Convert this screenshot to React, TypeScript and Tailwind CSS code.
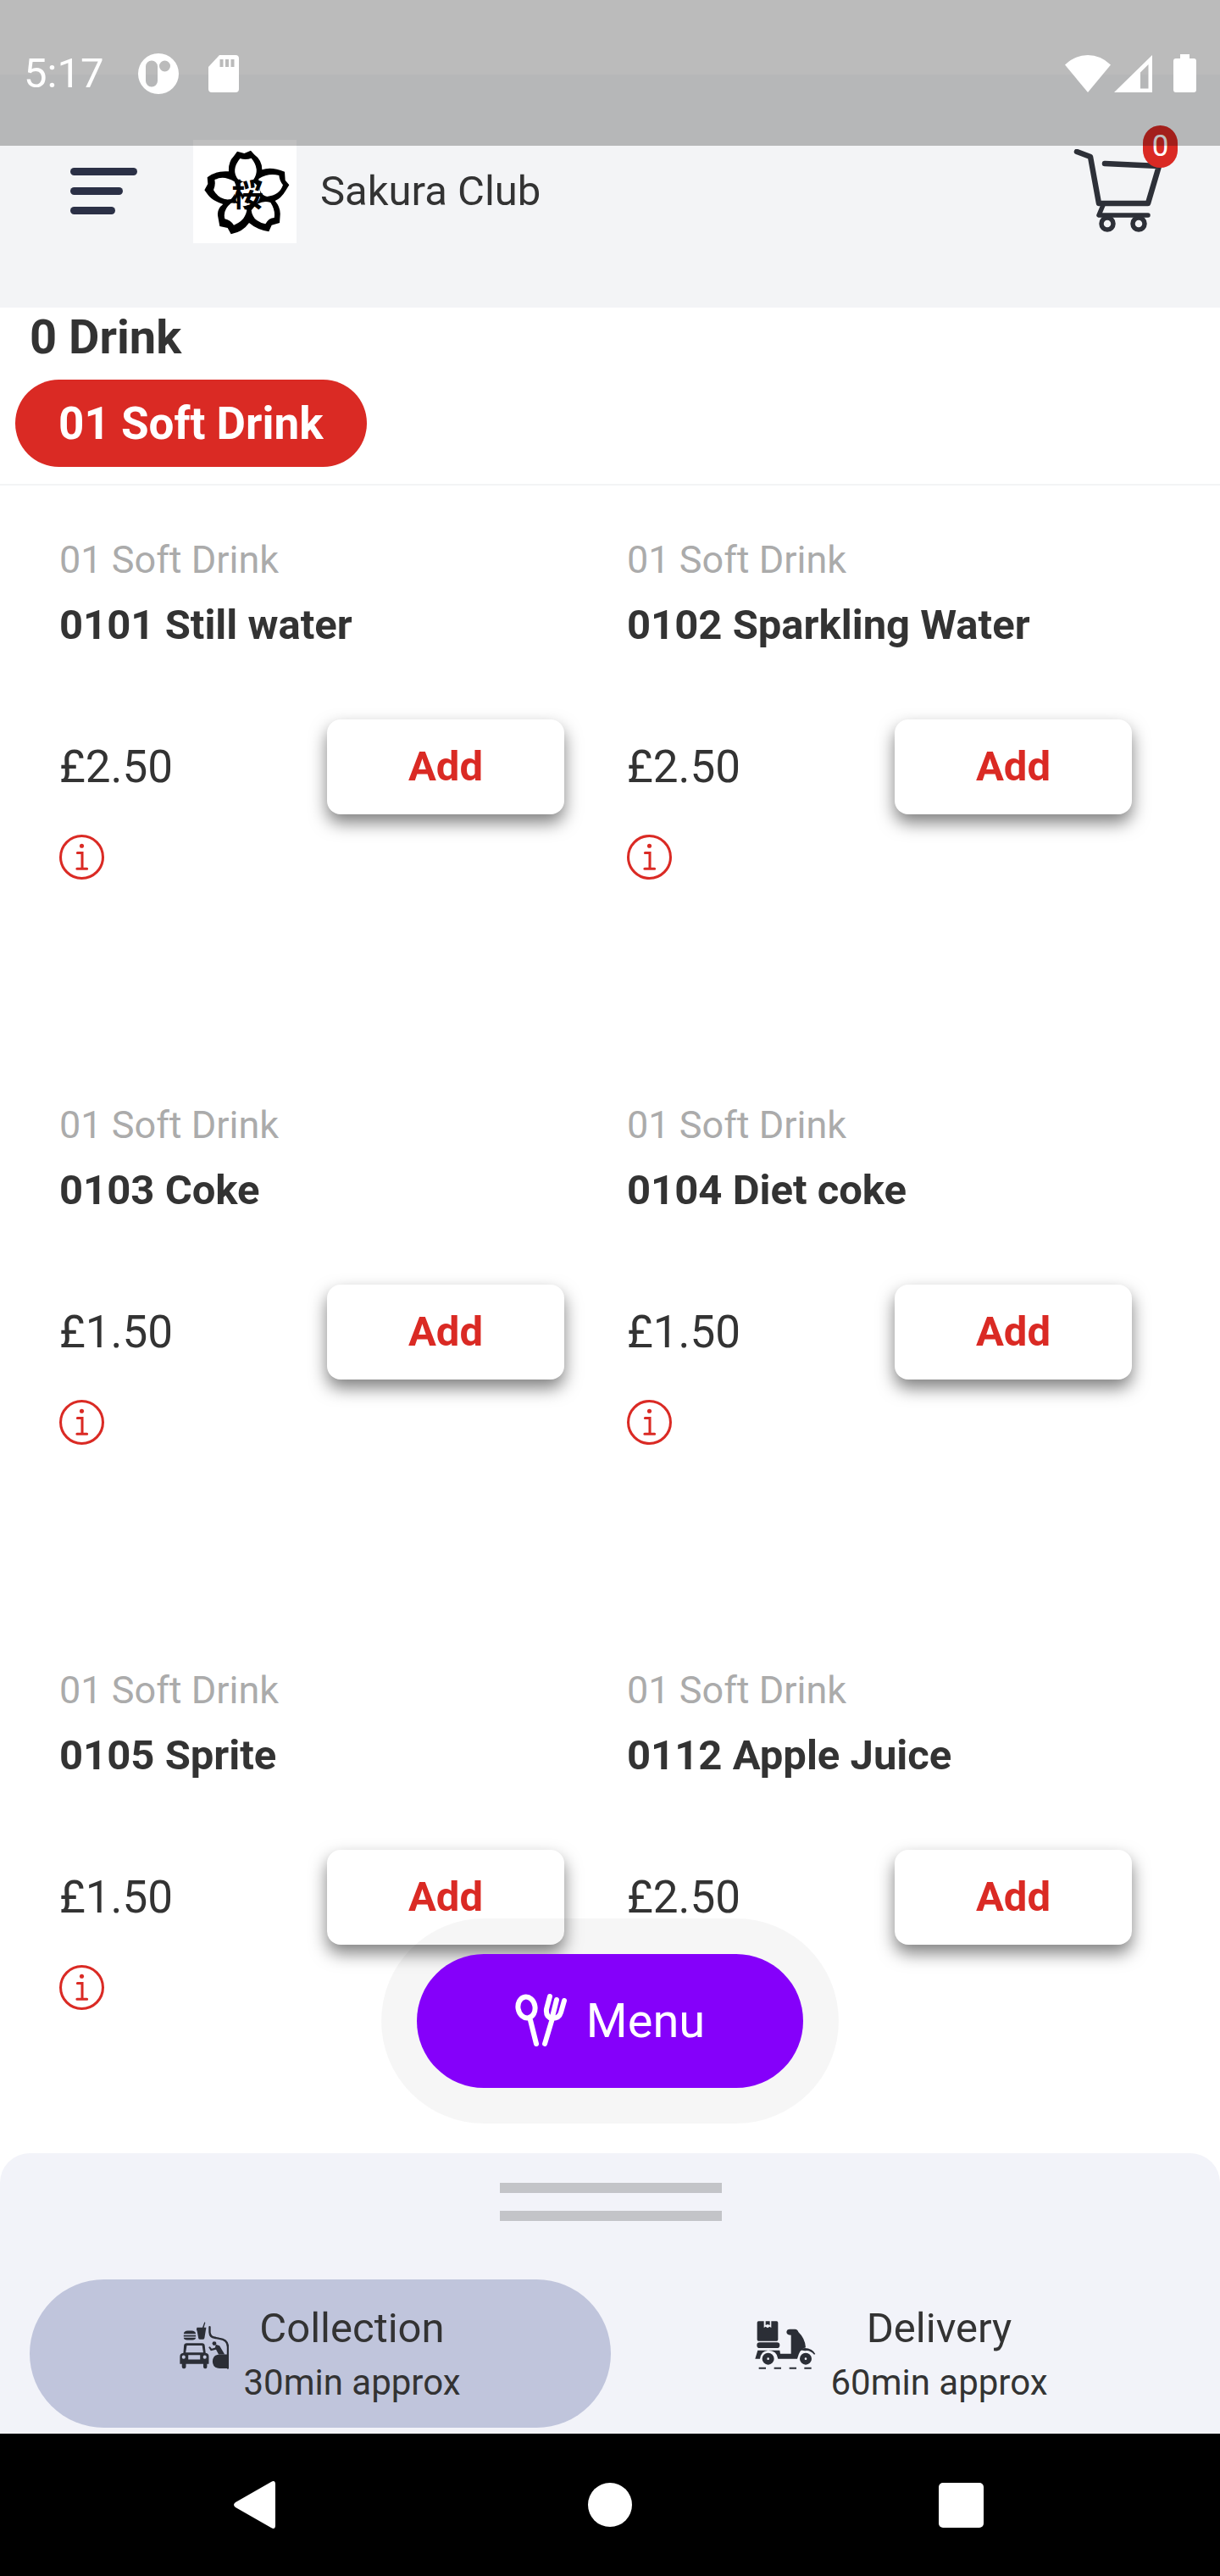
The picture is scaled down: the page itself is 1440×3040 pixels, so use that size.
import { useState } from 'react'

type Drink = { id: string; category: string; name: string; price: string; info: boolean }
type OrderMode = 'collection' | 'delivery'

const drinks: Drink[] = [
  { id: '0101', category: '01 Soft Drink', name: '0101 Still water', price: '£2.50', info: true },
  { id: '0102', category: '01 Soft Drink', name: '0102 Sparkling Water', price: '£2.50', info: true },
  { id: '0103', category: '01 Soft Drink', name: '0103 Coke', price: '£1.50', info: true },
  { id: '0104', category: '01 Soft Drink', name: '0104 Diet coke', price: '£1.50', info: true },
  { id: '0105', category: '01 Soft Drink', name: '0105 Sprite', price: '£1.50', info: true },
  { id: '0112', category: '01 Soft Drink', name: '0112 Apple Juice', price: '£2.50', info: false },
]

function StatusBar() {
  return (
    <div className="absolute inset-x-0 top-0 z-20 h-[172px] bg-black/25 pt-[57px] pl-[28px] pr-[28px] text-white">
      <div className="flex h-[60px] items-center">
        <span className="text-[49px] leading-[60px]">5:17</span>
        <svg className="ml-[40px] h-[50px] w-[50px]" viewBox="0 0 50 50" aria-hidden="true">
          <path
            fill="currentColor"
            fillRule="evenodd"
            d="M25 1a24 24 0 1 1 0 48a24 24 0 1 1 0-48ZM17 9.500a7 7 0 0 0-7 7v17a7 7 0 0 0 14 0v-17a7 7 0 0 0-7-7ZM32.500 9.500a6.500 6.500 0 1 0 0 13a6.500 6.500 0 1 0 0-13Z"
          />
        </svg>
        <svg className="ml-[34px] h-[46px] w-[36px]" viewBox="0 0 36 46" aria-hidden="true">
          <path
            fill="currentColor"
            fillRule="evenodd"
            d="M13 1h19q4 0 4 4v36q0 4-4 4H4q-4 0-4-4V15ZM13.500 6v9h4V6ZM20 6v9h4V6ZM26.500 6v9h4V6Z"
          />
        </svg>
        <svg className="ml-auto h-[46px] w-[54px]" viewBox="0 0 54 46" aria-hidden="true">
          <path fill="currentColor" d="M27 1Q42 1 54 12.500L27 45L0 12.500Q12 1 27 1Z" />
        </svg>
        <svg className="ml-[4px] h-[46px] w-[45px]" viewBox="0 0 45 46" aria-hidden="true">
          <path fill="currentColor" fillRule="evenodd" d="M45 1v44H0ZM40.500 12L31 21.500V40.500h9.500Z" />
        </svg>
        <svg className="ml-[25px] h-[46px] w-[27px]" viewBox="0 0 27 46" aria-hidden="true">
          <path fill="currentColor" d="M8 0h11v5h5q3 0 3 3v34q0 3-3 3H3q-3 0-3-3V8q0-3 3-3h5Z" />
        </svg>
      </div>
    </div>
  )
}

function SakuraLogo() {
  return (
    <svg className="h-[122px] w-[122px] bg-white" viewBox="24 12 366 366" role="img" aria-label="Sakura Club logo">
      <path d="M180 53L205 60L228 50L240 64Q268 84 268 118Q300 106 348 125L350 155L364 172L350 194Q336 218 314 228Q334 252 332 278L330 306L302 314L292 337Q250 330 222 306Q200 338 158 346L146 324L118 318L112 285Q106 258 130 240Q92 228 76 206L64 190L76 168L74 145Q104 120 150 124Q148 90 168 70Z" />
      <g fill="#fff">
        <path d="M190 78Q210 84 230 77Q262 116 238 152Q218 168 184 154Q156 120 190 78Z" />
        <path d="M256 150Q290 128 328 138Q330 158 342 172Q330 208 286 213Q254 208 256 150Z" />
        <path d="M230 262Q258 222 298 234Q316 262 311 288Q292 288 280 310Q234 300 230 262Z" />
        <path d="M158 236Q196 232 214 262Q208 298 168 314Q156 296 136 292Q128 260 158 236Z" />
        <path d="M96 190Q104 172 100 154Q130 136 170 160Q186 190 158 222Q120 230 96 190Z" />
        <circle cx="216" cy="204" r="46" />
      </g>
      <text
        x="216"
        y="249"
        fontSize="112"
        fontWeight="700"
        textAnchor="middle"
        className="font-['Noto_Sans_CJK_JP',sans-serif]"
      >
        桜
      </text>
    </svg>
  )
}

function CartIcon() {
  return (
    <svg
      className="h-[100px] w-[110px]"
      viewBox="0 0 110 100"
      fill="none"
      stroke="#2d3038"
      strokeWidth="6.500"
      strokeLinecap="round"
      strokeLinejoin="round"
      aria-hidden="true"
    >
      <path d="M5 3L21 9L31 64H89L102 20L38 17" />
      <path d="M36 66L31 78H89" strokeWidth="5.500" />
      <circle cx="41" cy="88" r="7" strokeWidth="5.500" />
      <circle cx="78" cy="88" r="7" strokeWidth="5.500" />
    </svg>
  )
}

function Header() {
  return (
    <header className="mt-[88px] flex h-[275px] items-center bg-[#f3f4f6] pl-[83px] pr-[50px]">
      <button type="button" aria-label="Open navigation">
        <svg className="h-[55px] w-[79px]" viewBox="0 0 79 55" fill="#2b3046" aria-hidden="true">
          <rect width="79" height="9" rx="4.500" />
          <rect y="23" width="62" height="9" rx="4.500" />
          <rect y="46" width="53" height="9" rx="4.500" />
        </svg>
      </button>
      <div className="ml-[66px] flex items-center gap-[28px]">
        <SakuraLogo />
        <span className="text-[49px] leading-[58px]">Sakura Club</span>
      </div>
      <button type="button" aria-label="Basket, 0 items" className="relative ml-auto pr-[14px]">
        <CartIcon />
        <span className="absolute right-0 top-[-28px] flex h-[50px] w-[41px] items-center justify-center rounded-full bg-[#da2a24] text-[35px] leading-[50px] text-white">
          0
        </span>
      </button>
    </header>
  )
}

function InfoIcon() {
  return (
    <svg
      className="h-[53px] w-[53px]"
      viewBox="0 0 52 52"
      fill="none"
      stroke="currentColor"
      strokeWidth="3"
      strokeLinecap="round"
      aria-hidden="true"
    >
      <circle cx="26" cy="26" r="24.500" />
      <circle cx="26" cy="13" r="2.500" fill="currentColor" stroke="none" />
      <path d="M21 21H26.500V39.500M20.500 39.500H32" />
    </svg>
  )
}

function DrinkCard({ drink }: { drink: Drink }) {
  return (
    <li>
      <p className="text-[45px] leading-[54px] text-[#ababab]">{drink.category}</p>
      <h2 className="mt-[21px] text-[49px] font-bold leading-[58px]">{drink.name}</h2>
      <div className="mt-[82px] flex items-center justify-between">
        <span className="text-[53px] leading-[62px]">{drink.price}</span>
        <button
          type="button"
          className="h-[112px] w-[280px] rounded-[16px] bg-white text-[49px] font-bold leading-[58px] text-[#da2a24] shadow-[0_10px_20px_rgba(0,0,0,0.5)]"
        >
          Add
        </button>
      </div>
      {drink.info && (
        <button type="button" aria-label={`About ${drink.name}`} className="mt-[24px] block text-[#da2a24]">
          <InfoIcon />
        </button>
      )}
    </li>
  )
}

function MenuButton() {
  return (
    <div className="absolute bottom-[35px] left-1/2 -translate-x-1/2 rounded-full bg-[#00000009] p-[42px]">
      <button
        type="button"
        className="flex h-[158px] w-[456px] items-center justify-center gap-[22px] rounded-full bg-[#8500fa] text-[56px] leading-[66px] text-white"
      >
        <svg
          className="h-[64px] w-[62px]"
          viewBox="0 0 62 64"
          fill="none"
          stroke="currentColor"
          strokeWidth="6"
          strokeLinecap="round"
          strokeLinejoin="round"
          aria-hidden="true"
        >
          <ellipse cx="13.500" cy="16" rx="10" ry="12.500" transform="rotate(-10 13.500 16)" />
          <path d="M18 31L25 59" />
          <path d="M41 3L37 18Q36 28 44 29Q52 29 54 22L58 8M49 7L44 27M44 29L35 59" />
        </svg>
        Menu
      </button>
    </div>
  )
}

function CollectionIcon() {
  return (
    <svg className="h-[56px] w-[58px]" viewBox="42 58 170 164" fill="#2b2e36" aria-hidden="true">
      <path d="M56 100Q58 89 70 89H84Q96 89 98 100ZM56 104H98V109H56ZM56 113H98Q97 121 86 121H68Q57 121 56 113Z" />
      <path d="M102 78H121L128 59L131 61L126 78H134L128 114Q127 119 122 119H112Q108 119 107 114L103 92Q98 86 102 78Z" />
      <path d="M66 132H120Q128 132 129 140L132 166Q143 168 143 178V204H137V214Q137 220 131 220Q124 220 124 214V204H64V214Q64 220 57 220Q50 220 50 214V204H43V178Q43 168 55 166L57 140Q58 132 66 132ZM67 140L63 164H124L120 140ZM72 173V188H113V173ZM56 174A6 6 0 1 0 56 186A6 6 0 1 0 56 174ZM129 174A6 6 0 1 0 129 186A6 6 0 1 0 129 174Z" fillRule="evenodd" />
      <path d="M146 76V94Q147 111 164 113L180 116Q209 120 209 145V218" fill="none" stroke="#2b2e36" strokeWidth="7" strokeLinecap="round" />
      <circle cx="162" cy="133" r="7" />
      <path d="M167 136L180 141L198 171H177L168 154L150 158L142 146L147 144L153 151L165 147Z" />
      <path d="M211 171V219H180Q156 217 156 195Q157 172 180 171Z" />
    </svg>
  )
}

function DeliveryIcon() {
  return (
    <svg className="h-[58px] w-[72px]" viewBox="36 58 216 174" fill="#2b2e36" aria-hidden="true">
      <path d="M49 59H68V82L74 78L81 83L88 78L94 82V59H113Q118 59 118 64V124Q118 129 113 129H49Q44 129 44 124V64Q44 59 49 59Z" />
      <path d="M74 59H89V73L81 70L74 73Z" />
      <rect x="43" y="134" width="81" height="20" rx="10" />
      <path d="M46 162H124L126 174H164V108Q148 108 148 97Q149 87 160 87H178Q188 88 190 97Q214 120 216 152Q194 158 186 192H118Q114 162 83 162Q58 164 54 192H37Z" />
      <path d="M190 160Q214 148 236 160Q246 166 250 175L246 177Q230 160 214 164" />
      <path d="M83 171A21 21 0 1 0 83 213A21 21 0 1 0 83 171ZM83 188A4 4 0 1 1 83 196A4 4 0 1 1 83 188ZM216 171A21 21 0 1 0 216 213A21 21 0 1 0 216 171ZM216 188A4 4 0 1 1 216 196A4 4 0 1 1 216 188Z" fillRule="evenodd" />
      <path d="M50 222H75V228H50ZM104 222H129V228H104ZM158 222H183V228H158ZM211 222H236V228H211Z" />
    </svg>
  )
}

function OrderSheet() {
  const [mode, setMode] = useState<OrderMode>('collection')
  const options = [
    { id: 'collection' as const, label: 'Collection', eta: '30min approx', icon: <CollectionIcon /> },
    { id: 'delivery' as const, label: 'Delivery', eta: '60min approx', icon: <DeliveryIcon /> },
  ]

  return (
    <section className="rounded-t-[35px] bg-[#f2f3f9] pb-[7px] pl-[35px] pr-[33px] pt-[35px]">
      {/* Drag handle */}
      <div className="mx-auto flex w-[262px] flex-col gap-[21px]">
        <div className="h-[12px] bg-[#c3c4c8]" />
        <div className="h-[12px] bg-[#c3c4c8]" />
      </div>
      <div className="mt-[69px] grid grid-cols-2">
        {options.map((option) => (
          <button
            key={option.id}
            type="button"
            aria-pressed={mode === option.id}
            onClick={() => setMode(option.id)}
            className={`flex h-[175px] items-center justify-center gap-[17px] rounded-full ${
              mode === option.id ? 'bg-[#c0c5dc]' : ''
            }`}
          >
            <span className="pb-[20px]">{option.icon}</span>
            <span className="flex flex-col gap-[10px] text-center">
              <span className="text-[49px] leading-[58px]">{option.label}</span>
              <span className="text-[42px] leading-[50px]">{option.eta}</span>
            </span>
          </button>
        ))}
      </div>
    </section>
  )
}

function SystemNav() {
  return (
    <nav aria-label="System" className="flex h-[168px] items-center justify-between bg-black pl-[274px] pr-[279px] text-white">
      <button type="button" aria-label="Back">
        <svg className="h-[58px] w-[57px]" viewBox="0 0 57 58" aria-hidden="true">
          <path fill="currentColor" d="M46 2Q51-1 51 5V53Q51 59 46 56L4 32Q0 29 4 26Z" />
        </svg>
      </button>
      <button type="button" aria-label="Home" className="h-[52px] w-[52px] rounded-full bg-white" />
      <button type="button" aria-label="Recent apps" className="h-[53px] w-[53px] rounded-[5px] bg-white" />
    </nav>
  )
}

export default function App() {
  return (
    <div className="relative flex min-h-screen flex-col bg-white font-['Roboto',sans-serif] text-[#333333]">
      <div className="absolute inset-x-0 top-0 h-[88px] bg-[#fafafa]" />
      <StatusBar />
      <Header />

      {/* Category heading and tabs */}
      <div className="border-b-2 border-[#f3f4f5] pb-[20px] pt-[2px]">
        <h1 className="pl-[35px] text-[56px] font-bold leading-[66px]">0 Drink</h1>
        <div className="mt-[17px] flex pl-[18px]">
          <button
            type="button"
            className="h-[103px] rounded-full bg-[#da2a24] px-[51px] text-[53px] font-bold leading-[62px] text-white"
          >
            01 Soft Drink
          </button>
        </div>
      </div>

      <main className="relative flex-1 pb-[168px] pl-[70px] pr-[104px] pt-[61px]">
        <ul className="grid grid-cols-2 gap-x-[74px] gap-y-[263px]">
          {drinks.map((drink) => (
            <DrinkCard key={drink.id} drink={drink} />
          ))}
        </ul>
        <MenuButton />
      </main>

      <OrderSheet />
      <SystemNav />
    </div>
  )
}
